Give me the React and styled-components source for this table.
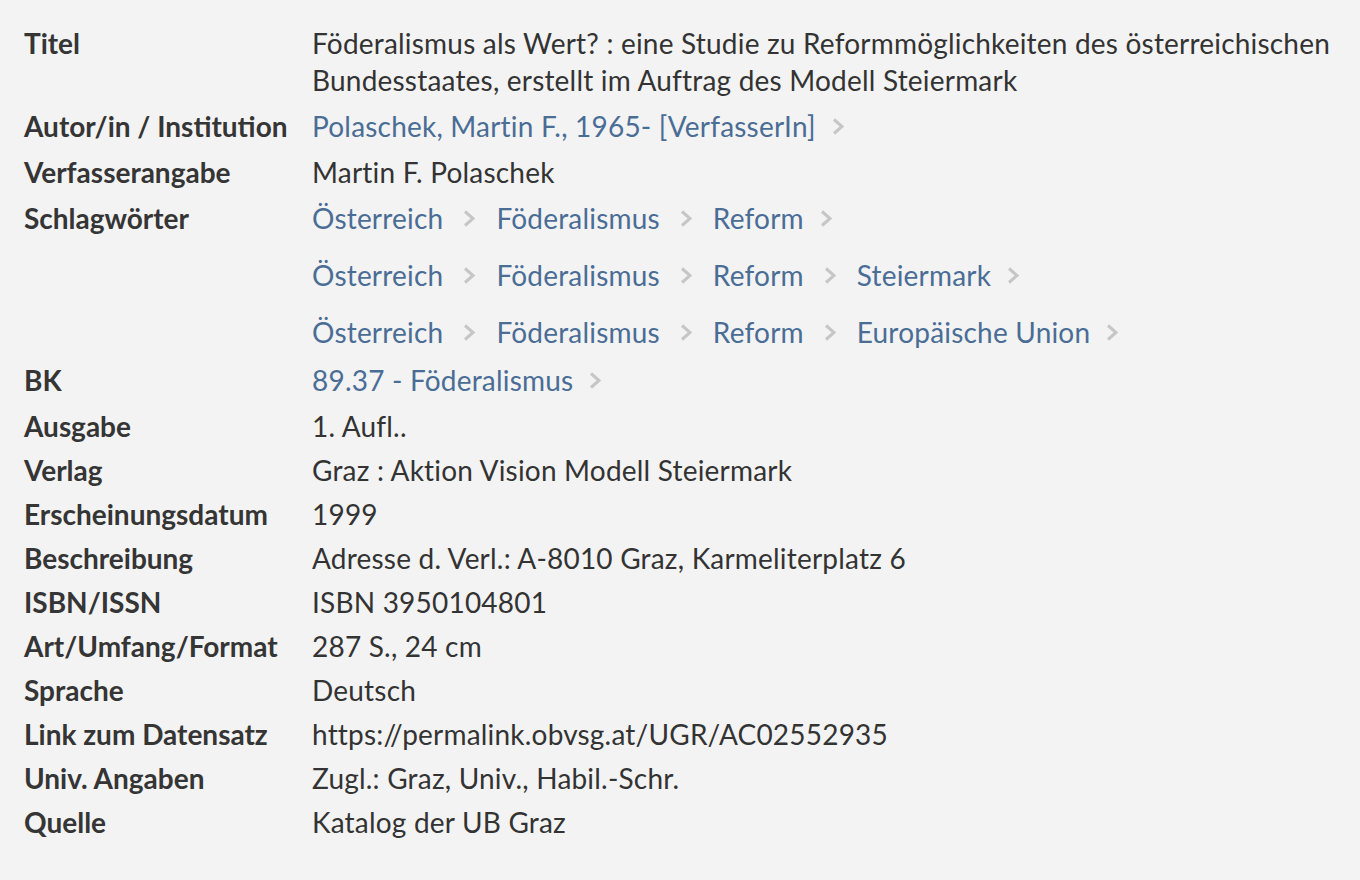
import React from 'react';
import styled, { createGlobalStyle } from 'styled-components';

const GlobalStyle = createGlobalStyle`
  html, body {
    margin: 0;
    padding: 0;
    background: #f3f3f3;
  }
  body {
    font-family: Lato, "Liberation Sans", sans-serif;
    color: #333;
  }
`;

const Page = styled.main`
  padding: 21px 15px 20px 24px;
  font-size: 28px;
  line-height: 37px;
  letter-spacing: 0.2px;
`;

const Row = styled.div`
  display: grid;
  grid-template-columns: 288px 1fr;
  padding: 3.5px 0;
`;

const Label = styled.div`
  font-weight: 700;
  color: #353535;
  letter-spacing: 0;
  line-height: ${(p) => (p.$link ? '41px' : '37px')};
`;

const Value = styled.div`
  color: #333;
`;

const ChainList = styled.div`
  display: flex;
  flex-direction: column;
  gap: 16px;
`;

const ChainLine = styled.div`
  display: flex;
  align-items: center;
  height: 41px;
`;

const Link = styled.a`
  color: #4a6d96;
  text-decoration: none;
  white-space: nowrap;
`;

const Chev = styled.svg`
  flex: none;
  width: 12px;
  height: 17px;
  margin: ${(p) => (p.$trail ? '0 0 0 16px' : '0 21px 0 20px')};
`;

const Chevron = ({ trail }) => (
  <Chev $trail={trail} viewBox="0 0 12 17">
    <polyline points="2,1.5 10,8.5 2,15.5" fill="none" stroke="#c6c6c6" strokeWidth="3" />
  </Chev>
);

const Chain = ({ items }) => (
  <ChainLine>
    {items.map((item, i) => (
      <React.Fragment key={item}>
        <Link href="#">{item}</Link>
        <Chevron trail={i === items.length - 1} />
      </React.Fragment>
    ))}
  </ChainLine>
);

const subjects = [
  ['Österreich', 'Föderalismus', 'Reform'],
  ['Österreich', 'Föderalismus', 'Reform', 'Steiermark'],
  ['Österreich', 'Föderalismus', 'Reform', 'Europäische Union'],
];

const plain = [
  ['Ausgabe', '1. Aufl..'],
  ['Verlag', 'Graz : Aktion Vision Modell Steiermark'],
  ['Erscheinungsdatum', '1999'],
  ['Beschreibung', 'Adresse d. Verl.: A-8010 Graz, Karmeliterplatz 6'],
  ['ISBN/ISSN', 'ISBN 3950104801'],
  ['Art/Umfang/Format', '287 S., 24 cm'],
  ['Sprache', 'Deutsch'],
  ['Link zum Datensatz', 'https://permalink.obvsg.at/UGR/AC02552935'],
  ['Univ. Angaben', 'Zugl.: Graz, Univ., Habil.-Schr.'],
  ['Quelle', 'Katalog der UB Graz'],
];

export default function App() {
  return (
    <>
      <GlobalStyle />
      <Page>
        <Row>
          <Label>Titel</Label>
          <Value>
            Föderalismus als Wert? : eine Studie zu Reformmöglichkeiten des österreichischen
            Bundesstaates, erstellt im Auftrag des Modell Steiermark
          </Value>
        </Row>
        <Row>
          <Label $link>Autor/in / Institution</Label>
          <Chain items={['Polaschek, Martin F., 1965- [VerfasserIn]']} />
        </Row>
        <Row>
          <Label>Verfasserangabe</Label>
          <Value>Martin F. Polaschek</Value>
        </Row>
        <Row>
          <Label $link>Schlagwörter</Label>
          <ChainList>
            {subjects.map((s) => (
              <Chain key={s.join('-')} items={s} />
            ))}
          </ChainList>
        </Row>
        <Row>
          <Label $link>BK</Label>
          <Chain items={['89.37 - Föderalismus']} />
        </Row>
        {plain.map(([label, value]) => (
          <Row key={label}>
            <Label>{label}</Label>
            <Value>{value}</Value>
          </Row>
        ))}
      </Page>
    </>
  );
}
